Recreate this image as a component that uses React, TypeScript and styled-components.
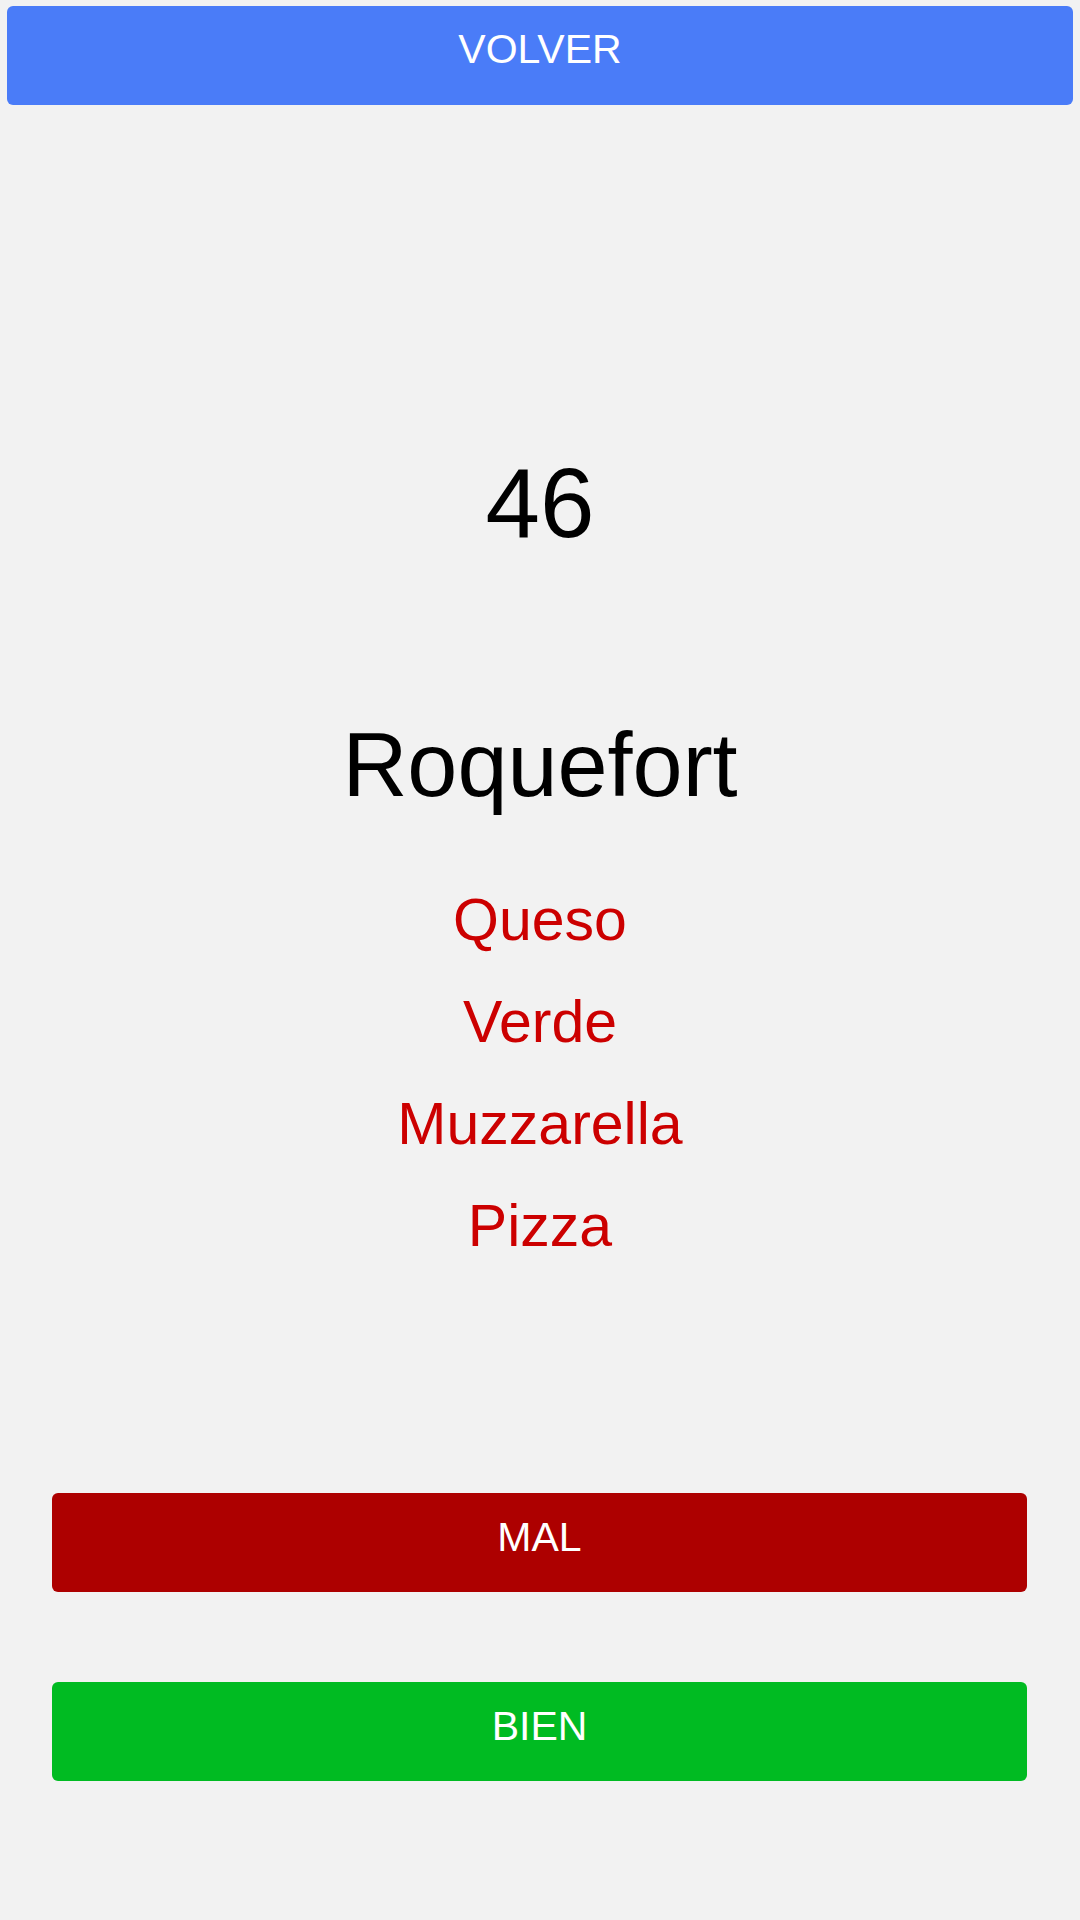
import React from "react";
import styled, { createGlobalStyle } from "styled-components";

const GlobalStyle = createGlobalStyle`
  html, body {
    margin: 0;
    padding: 0;
    background: #f2f2f2;
  }
  body {
    font-family: "Liberation Sans", Arial, Helvetica, sans-serif;
  }
  * { box-sizing: border-box; }
`;

const Page = styled.div`
  width: 1080px;
  min-height: 1920px;
  background: #f2f2f2;
  padding: 6px 7px 0 7px;
  display: flex;
  flex-direction: column;
`;

const ActionButton = styled.button<{ $bg: string; $pb: number }>`
  display: flex;
  align-items: center;
  justify-content: center;
  width: 100%;
  height: 99px;
  border: none;
  border-radius: 6px;
  background: ${(p) => p.$bg};
  color: #ffffff;
  font-family: "Liberation Sans", Arial, Helvetica, sans-serif;
  font-size: 41px;
  line-height: 1;
  padding: 0 0 ${(p) => p.$pb}px 0;
  margin: 0;
  cursor: pointer;
`;

const Card = styled.div`
  display: flex;
  flex-direction: column;
  align-items: center;
  text-align: center;
`;

const Count = styled.div`
  margin-top: 349px;
  font-size: 98px;
  line-height: 1;
  color: #000;
`;

const Word = styled.div`
  margin-top: 168px;
  font-size: 90px;
  line-height: 1;
  color: #000;
`;

const Options = styled.ul`
  list-style: none;
  margin: 59px 0 0 0;
  padding: 0;
`;

const Option = styled.li`
  font-size: 59px;
  line-height: 102px;
  color: #cc0000;
`;

const Answers = styled.div`
  margin: 216px 46px 0 45px;
  display: flex;
  flex-direction: column;
  gap: 90px;
`;

export default function App() {
  const options = ["Queso", "Verde", "Muzzarella", "Pizza"];
  return (
    <>
      <GlobalStyle />
      <Page>
        <ActionButton $bg="#4a7cf8" $pb={12}>VOLVER</ActionButton>
        <Card>
          <Count>46</Count>
          <Word>Roquefort</Word>
          <Options>
            {options.map((o) => (
              <Option key={o}>{o}</Option>
            ))}
          </Options>
        </Card>
        <Answers>
          <ActionButton $bg="#ad0000" $pb={10}>MAL</ActionButton>
          <ActionButton $bg="#00bb22" $pb={10}>BIEN</ActionButton>
        </Answers>
      </Page>
    </>
  );
}
